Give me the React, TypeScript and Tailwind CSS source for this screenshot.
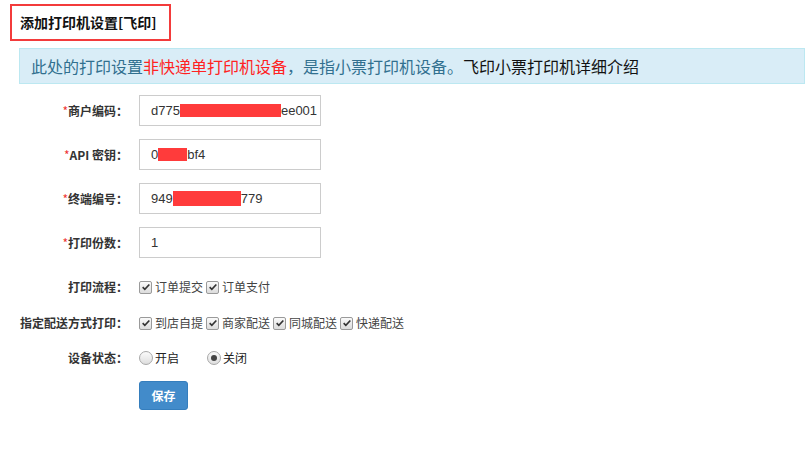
import React from "react";

const font = "font-['Microsoft_YaHei','Noto_Sans_CJK_SC','Noto_Sans',sans-serif]";

const Redact = ({ w, h }: { w: number; h: number }) => (
  <span className="inline-block bg-[#ff3b3b] align-middle" style={{ width: w, height: h }} />
);

const Check = ({ label }: { label: string }) => (
  <label className="flex items-center mr-[3px]">
    <span className="w-[13px] h-[13px] rounded-[2px] border border-[#9a9a9a] bg-gradient-to-b from-[#fafafa] to-[#dcdcdc] flex items-center justify-center">
      <svg viewBox="0 0 12 12" className="w-[10px] h-[10px]">
        <path d="M2 6.2l2.6 2.6L10 3" stroke="#333" strokeWidth="2" fill="none" />
      </svg>
    </span>
    <span className="ml-[3px] text-[12px] text-[#444]">{label}</span>
  </label>
);

const Radio = ({ label, on }: { label: string; on?: boolean }) => (
  <label className="flex items-center">
    <span className="w-[14px] h-[14px] rounded-full border border-[#a8a8a8] bg-gradient-to-b from-[#fbfbfb] to-[#dedede] flex items-center justify-center">
      {on && <span className="w-[6px] h-[6px] rounded-full bg-[#444]" />}
    </span>
    <span className="ml-[2px] text-[12px] text-[#222]">{label}</span>
  </label>
);

const Label = ({ text, req }: { text: string; req?: boolean }) => (
  <div className="w-[139px] pr-[11px] text-right text-[12px] font-bold text-[#333] shrink-0">
    {req && <span className="text-[#e33] font-normal">*</span>}
    {text}
  </div>
);

const Field = ({ children }: { children: React.ReactNode }) => (
  <div className="w-[182px] h-[31px] border border-[#ccc] flex items-center pl-[11px] text-[13px] text-[#333] overflow-hidden whitespace-nowrap font-['Liberation_Sans',sans-serif]">
    {children}
  </div>
);

export default function App() {
  return (
    <div className={`w-[805px] h-[454px] bg-white ${font}`}>
      <div className="pt-[4px] pl-[10px]">
        <div className="w-[161px] h-[37px] border-2 border-[#f33b3b] flex items-center pl-[8px] text-[14px] font-bold text-[#111]">
          添加打印机设置[飞印]
        </div>
      </div>
      <div className="mt-[7px] ml-[19px] h-[36px] border border-[#bce8f1] bg-[#d9edf7] flex items-center pl-[11px] text-[16px] text-[#31708f]">
        此处的打印设置<span className="text-[#f22]">非快递单打印机设备</span>，是指小票打印机设备。
        <span className="text-[#111]">飞印小票打印机详细介绍</span>
      </div>

      <div className="mt-[11px] flex flex-col">
        <div className="flex items-center">
          <Label text="商户编码：" req />
          <Field>
            d775<Redact w={101} h={13} />ee001
          </Field>
        </div>
        <div className="flex items-center mt-[13px]">
          <Label text="API 密钥：" req />
          <Field>
            0<Redact w={29} h={13} />bf4
          </Field>
        </div>
        <div className="flex items-center mt-[13px]">
          <Label text="终端编号：" req />
          <Field>
            949<Redact w={68} h={15} />779
          </Field>
        </div>
        <div className="flex items-center mt-[13px]">
          <Label text="打印份数：" req />
          <Field>1</Field>
        </div>

        <div className="flex items-center mt-[19px] h-[20px]">
          <Label text="打印流程：" />
          <Check label="订单提交" />
          <Check label="订单支付" />
        </div>
        <div className="flex items-center mt-[16px] h-[20px]">
          <Label text="指定配送方式打印：" />
          <Check label="到店自提" />
          <Check label="商家配送" />
          <Check label="同城配送" />
          <Check label="快递配送" />
        </div>
        <div className="flex items-center mt-[15px] h-[20px]">
          <Label text="设备状态：" />
          <div className="flex items-center gap-[28px]">
            <Radio label="开启" />
            <Radio label="关闭" on />
          </div>
        </div>
        <div className="flex mt-[13px]">
          <div className="w-[139px]" />
          <button className="w-[49px] h-[29px] rounded-[3px] bg-[#428bca] border border-[#357ebd] text-white text-[12px] font-bold">
            保存
          </button>
        </div>
      </div>
    </div>
  );
}
